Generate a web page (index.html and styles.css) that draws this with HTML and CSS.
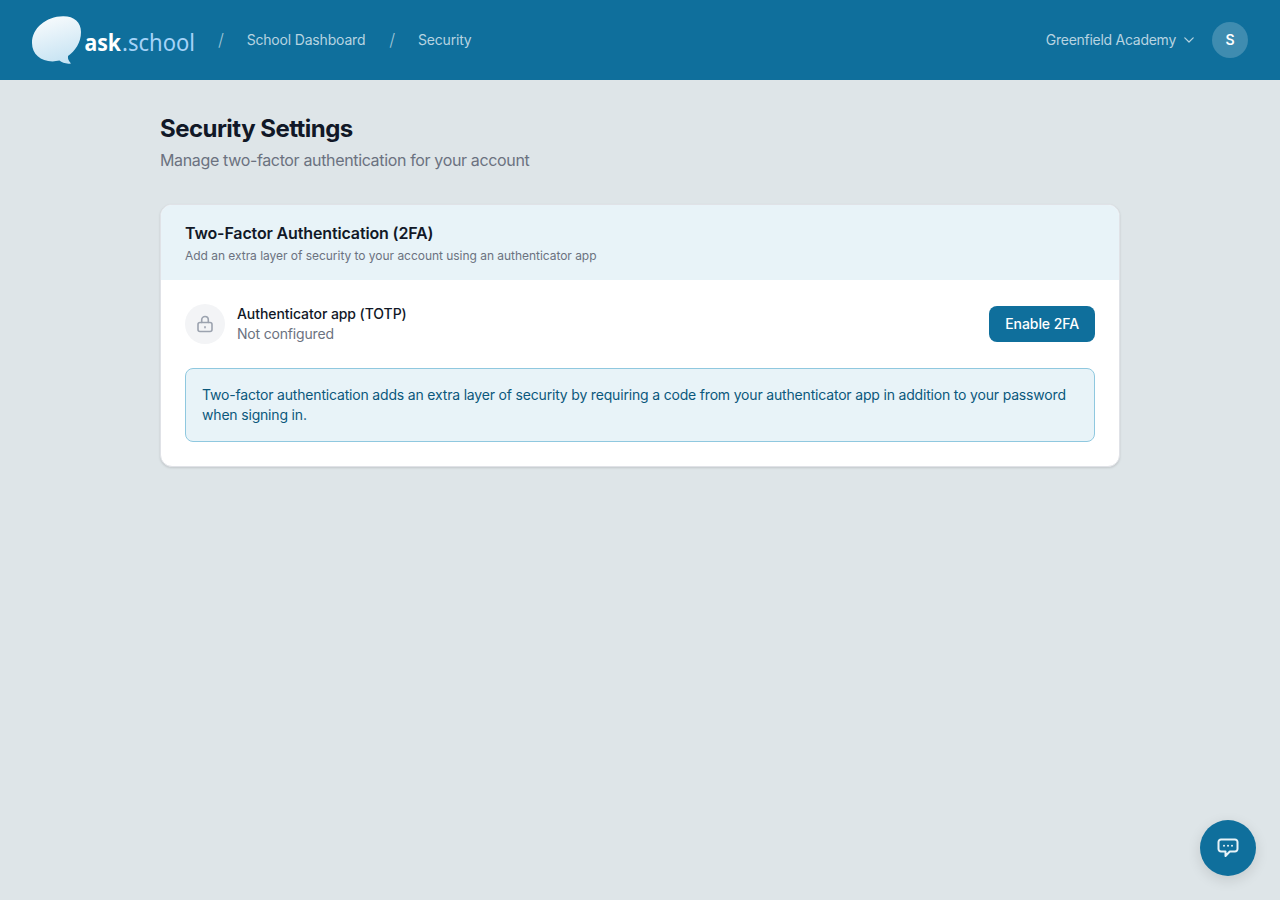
FILE: index.html
```html
<!DOCTYPE html>
<html lang="en">
<head>
    <meta charset="UTF-8">
    <meta name="viewport" content="width=device-width, initial-scale=1.0">
    <title>Security Settings - ask.school</title>
    <link rel="stylesheet" href="styles.css">
</head>
<body>
    <header class="topbar">
        <nav class="breadcrumbs">
            <a href="#" class="logo">
                <svg width="162" height="48" viewBox="0 0 162 48">
                    <defs>
                        <linearGradient id="bubble" x1="0.3" y1="0" x2="0.6" y2="1">
                            <stop offset="0" stop-color="#f8fbfd"/>
                            <stop offset="1" stop-color="#c6e3f3"/>
                        </linearGradient>
                    </defs>
                    <path fill="url(#bubble)" d="M31 0.2C42 0 49 6 49 16C49 27 43 35 36 40C35.500 43 37 45.500 39 47.400C35 48.300 30 47 27.500 44.600C12 48 0 40 0 27C0 12 14 0.500 31 0.200Z"/>
                    <text class="logo-ask" x="52.500" y="35" textLength="36.500" lengthAdjust="spacingAndGlyphs">ask</text>
                    <text class="logo-school" x="90" y="35" textLength="73" lengthAdjust="spacingAndGlyphs">.school</text>
                </svg>
            </a>
            <span class="slash">/</span>
            <a href="#">School Dashboard</a>
            <span class="slash">/</span>
            <a href="#">Security</a>
        </nav>
        <div class="account">
            <button class="school-menu">
                Greenfield Academy
                <svg width="10" height="6" viewBox="0 0 10 6" fill="none" stroke="currentColor" stroke-width="1.200" stroke-linecap="round" stroke-linejoin="round"><path d="M0.800 0.800L5 5L9.200 0.800"/></svg>
            </button>
            <span class="avatar">S</span>
        </div>
    </header>

    <main class="container">
        <h1>Security Settings</h1>
        <p class="subtitle">Manage two-factor authentication for your account</p>

        <section class="card">
            <div class="card-header">
                <h2>Two-Factor Authentication (2FA)</h2>
                <p>Add an extra layer of security to your account using an authenticator app</p>
            </div>
            <div class="card-body">
                <div class="method">
                    <span class="method-icon">
                        <svg width="20" height="20" viewBox="0 0 20 20" fill="none" stroke="currentColor" stroke-width="1.600" stroke-linecap="round">
                            <rect x="3" y="8.500" width="14" height="9" rx="2"/>
                            <path d="M6.700 8.500V5.800a3.300 3.300 0 0 1 6.600 0V8.500M10 12.700v1"/>
                        </svg>
                    </span>
                    <div class="method-text">
                        <h3>Authenticator app (TOTP)</h3>
                        <p>Not configured</p>
                    </div>
                    <button class="btn">Enable 2FA</button>
                </div>
                <div class="notice">
                    Two-factor authentication adds an extra layer of security by requiring a code from your authenticator app in addition to your password when signing in.
                </div>
            </div>
        </section>
    </main>

    <button class="chat" aria-label="Open chat">
        <svg width="24" height="24" viewBox="0 0 24 24" fill="none" stroke="currentColor" stroke-width="2" stroke-linejoin="round">
            <path d="M5 3.500h14a2.500 2.500 0 0 1 2.500 2.500v7a2.500 2.500 0 0 1-2.500 2.500h-5.200L9.500 20v-4.500H5a2.500 2.500 0 0 1-2.500-2.500V6A2.500 2.500 0 0 1 5 3.500Z"/>
            <path class="dots" d="M8 9.700h.01M12 9.700h.01M16 9.700h.01"/>
        </svg>
    </button>
</body>
</html>
```
FILE: styles.css
```css
* {
    box-sizing: border-box;
}

body {
    font-family: Inter, sans-serif;
    margin: 0;
    min-height: 100vh;
    background-color: #dee5e8;
    color: #111827;
    font-size: 14px;
    line-height: 20px;
    letter-spacing: -0.18px;
}

h1, h2, h3, p {
    margin: 0;
}

a {
    color: inherit;
    text-decoration: none;
}

button {
    font: inherit;
    letter-spacing: inherit;
    border: none;
    cursor: pointer;
}

.topbar {
    display: flex;
    align-items: center;
    justify-content: space-between;
    height: 80px;
    padding: 0 32px;
    background-color: #0f6f9c;
    color: #b7d4e1;
}

.breadcrumbs {
    display: flex;
    align-items: center;
    gap: 24px;
}

.logo svg {
    display: block;
    overflow: visible;
}

.logo-ask,
.logo-school {
    font-family: "Noto Sans", sans-serif;
    font-size: 24px;
    letter-spacing: 0;
}

.logo-ask {
    font-weight: 700;
    fill: #ffffff;
}

.logo-school {
    fill: #a5d3f8;
}

.slash {
    font-size: 17px;
    font-weight: 300;
    letter-spacing: -1.3px;
    color: #9fc5d7;
}

.account {
    display: flex;
    align-items: center;
    gap: 18px;
}

.school-menu {
    display: flex;
    align-items: center;
    gap: 8px;
    padding: 0;
    background: none;
    color: inherit;
    letter-spacing: -0.27px;
}

.avatar {
    display: flex;
    align-items: center;
    justify-content: center;
    width: 36px;
    height: 36px;
    border-radius: 50%;
    background-color: #3f8cb0;
    color: #fff;
    font-weight: 600;
}

.container {
    width: 960px;
    margin: 0 auto;
    padding-top: 33px;
}

h1 {
    font-size: 24px;
    line-height: 32px;
    font-weight: 700;
    letter-spacing: -0.53px;
}

.subtitle {
    margin-top: 3px;
    font-size: 16px;
    line-height: 24px;
    letter-spacing: -0.35px;
    color: #6b7280;
}

.card {
    margin-top: 32px;
    border: 1px solid #e0e2e7;
    border-radius: 12px;
    background-color: #fff;
    box-shadow: 0 1px 3px rgba(0, 0, 0, 0.08), 0 1px 2px rgba(0, 0, 0, 0.06);
    overflow: hidden;
}

.card-header {
    padding: 16px 24px 15px;
    background-color: #e8f3f8;
    border-bottom: 1px solid #e8f3f8;
}

.card-header h2 {
    font-size: 16px;
    line-height: 24px;
    font-weight: 600;
    letter-spacing: -0.14px;
}

.card-header p {
    margin-top: 3px;
    font-size: 12px;
    line-height: 16px;
    letter-spacing: -0.035px;
    color: #6b7280;
}

.card-body {
    padding: 24px;
}

.method {
    display: flex;
    align-items: center;
    gap: 12px;
}

.method-icon {
    display: flex;
    align-items: center;
    justify-content: center;
    width: 40px;
    height: 40px;
    border-radius: 50%;
    background-color: #f3f4f6;
    color: #9ca3af;
}

.method-text {
    flex: 1;
}

.method-text h3 {
    font-size: 14px;
    font-weight: 500;
    letter-spacing: -0.07px;
}

.method-text p {
    color: #6b7280;
}

.btn {
    padding: 8px 16px;
    border-radius: 8px;
    background-color: #0f6f9c;
    color: #fff;
    font-weight: 500;
    letter-spacing: -0.07px;
}

.notice {
    margin-top: 24px;
    padding: 16px;
    border: 1px solid #8fc8df;
    border-radius: 8px;
    background-color: #e8f3f8;
    color: #0b587c;
}

.chat {
    position: fixed;
    right: 24px;
    bottom: 24px;
    display: flex;
    align-items: center;
    justify-content: center;
    width: 56px;
    height: 56px;
    padding: 0;
    border-radius: 50%;
    background-color: #0f6f9c;
    color: #e8f3f8;
    box-shadow: 0 4px 14px rgba(0, 0, 0, 0.12);
}

.dots {
    stroke-linecap: round;
}
```
